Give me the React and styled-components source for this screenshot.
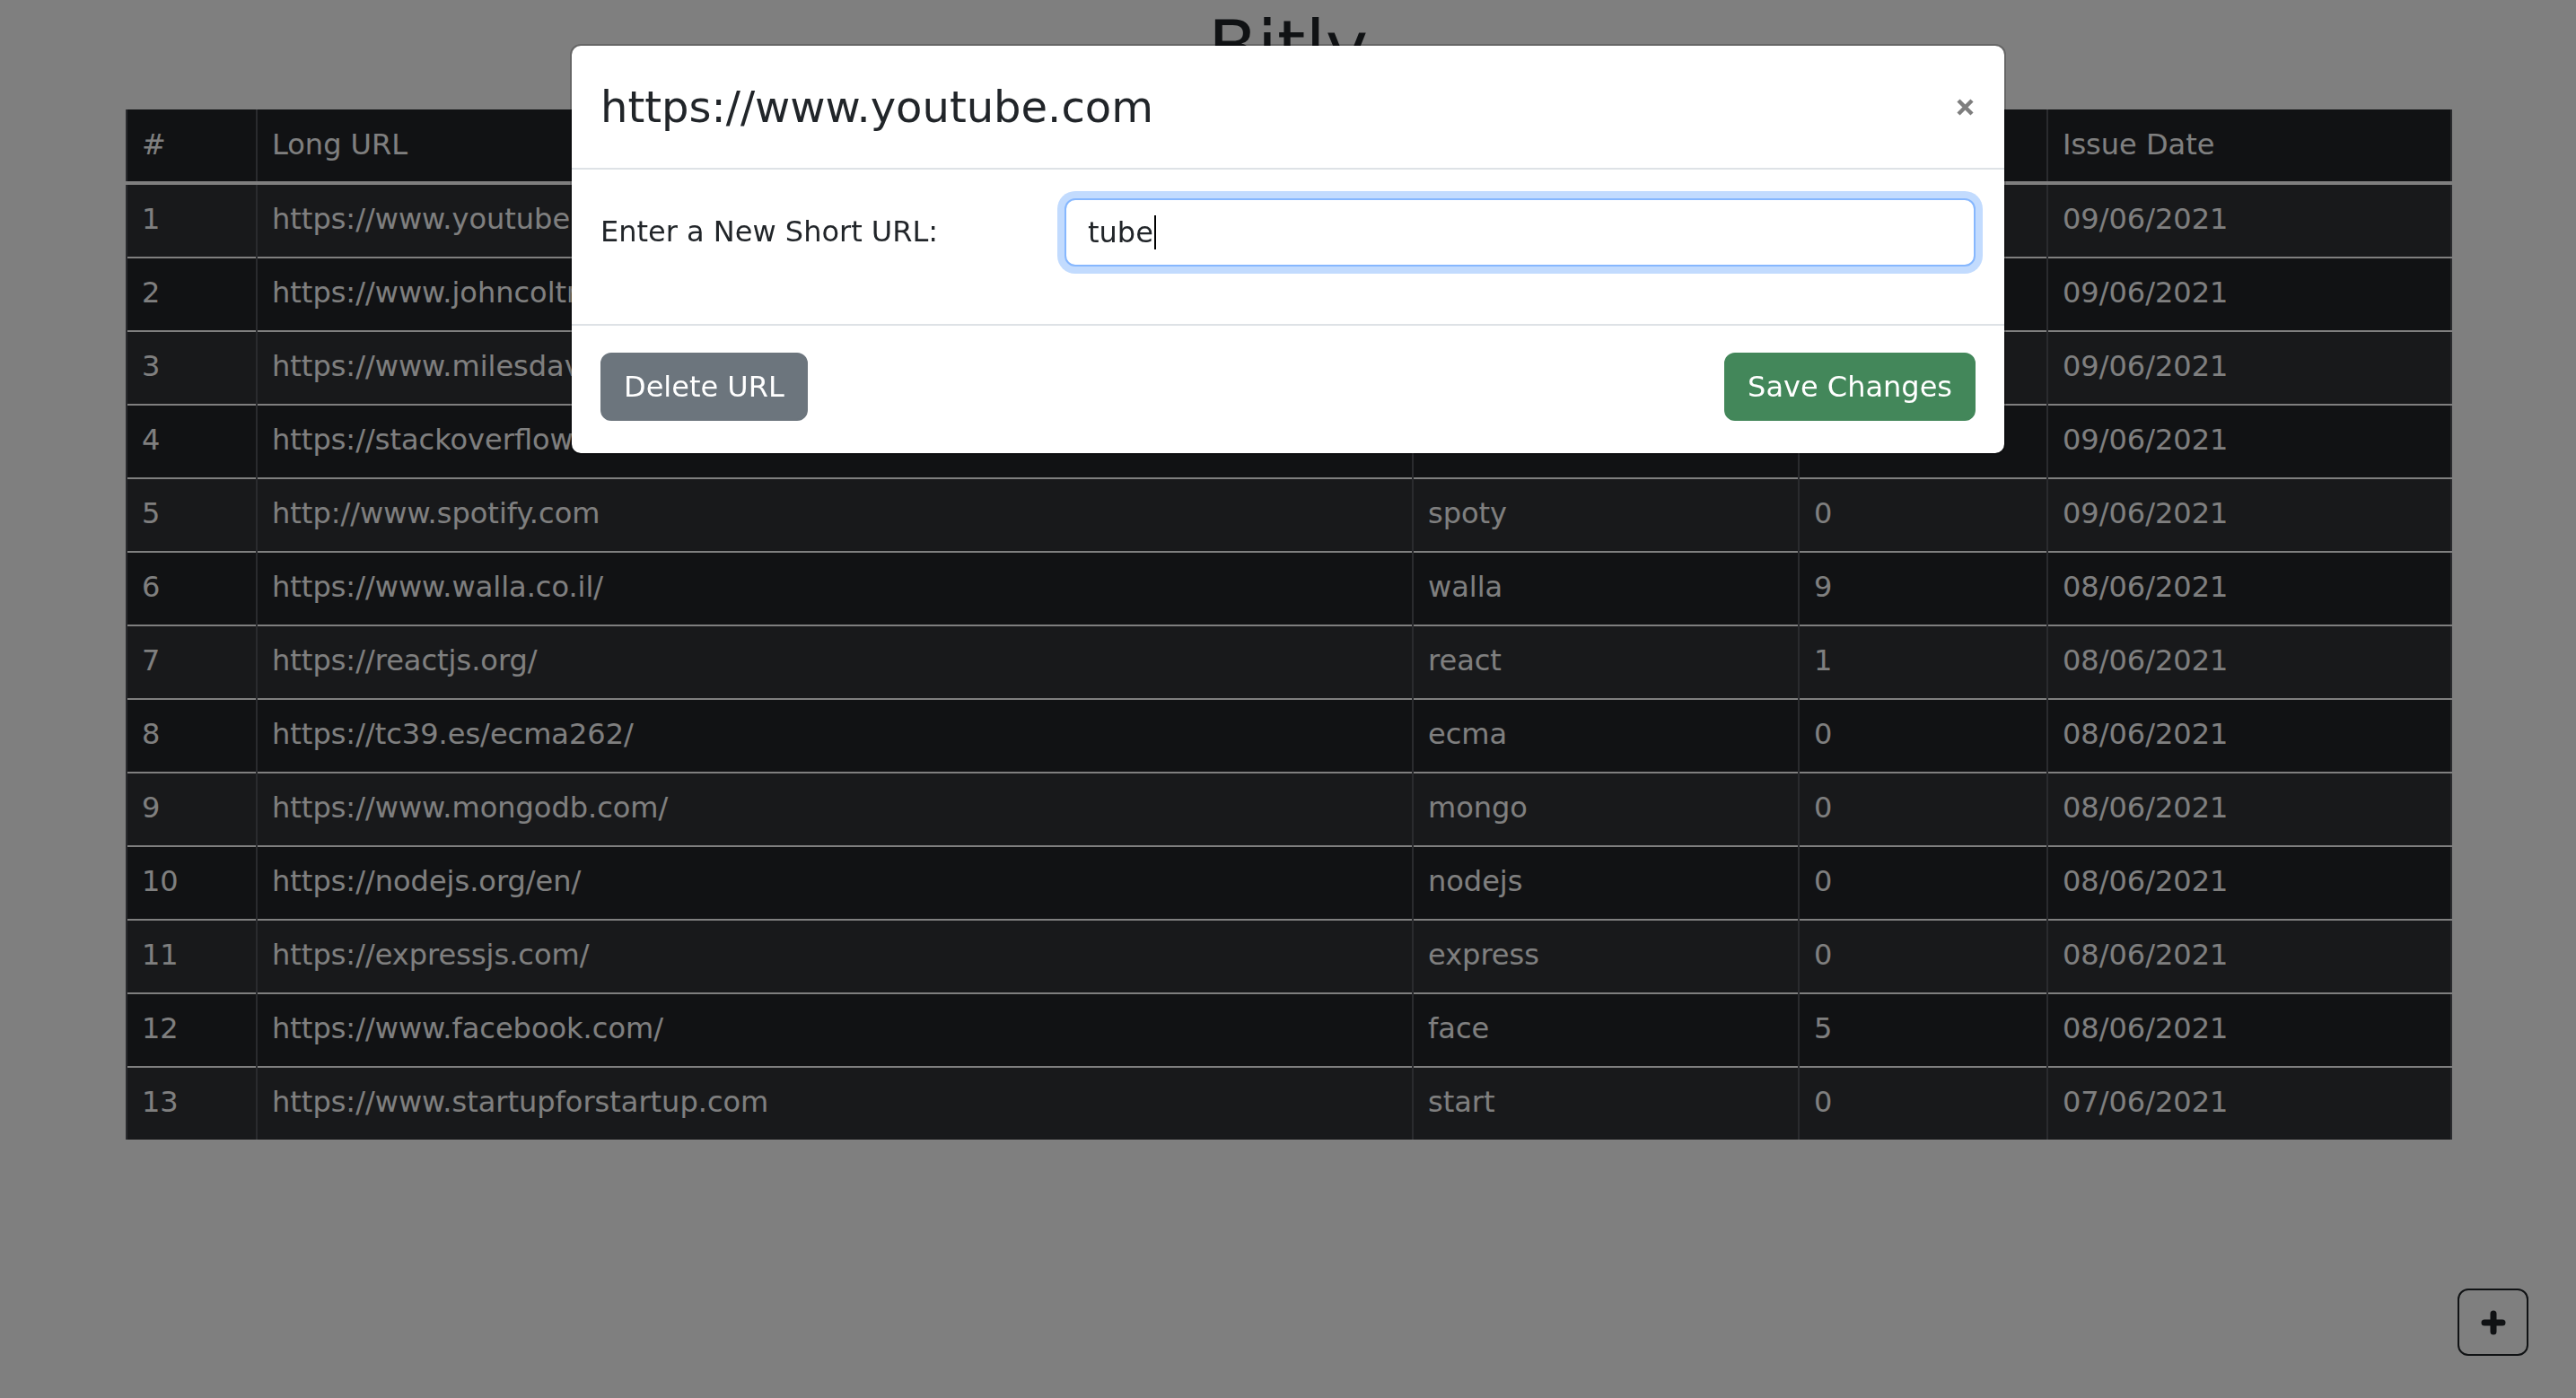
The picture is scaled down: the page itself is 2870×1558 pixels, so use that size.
import React from "react";
import styled, { createGlobalStyle } from "styled-components";

const GlobalStyle = createGlobalStyle`
  html, body {
    margin: 0;
    padding: 0;
  }
  body {
    background: #ffffff;
    color: #212529;
    font-family: "DejaVu Sans", "Liberation Sans", sans-serif;
    font-size: 32px;
    line-height: 1.5;
  }
  * {
    box-sizing: border-box;
  }
`;

const links = [
  { id: 1, long: "https://www.youtube.com", short: "tube", clicks: 3, date: "09/06/2021" },
  { id: 2, long: "https://www.johncoltrane.com", short: "coltrane", clicks: 0, date: "09/06/2021" },
  { id: 3, long: "https://www.milesdavis.com", short: "miles", clicks: 0, date: "09/06/2021" },
  { id: 4, long: "https://stackoverflow.com/", short: "stack", clicks: 2, date: "09/06/2021" },
  { id: 5, long: "http://www.spotify.com", short: "spoty", clicks: 0, date: "09/06/2021" },
  { id: 6, long: "https://www.walla.co.il/", short: "walla", clicks: 9, date: "08/06/2021" },
  { id: 7, long: "https://reactjs.org/", short: "react", clicks: 1, date: "08/06/2021" },
  { id: 8, long: "https://tc39.es/ecma262/", short: "ecma", clicks: 0, date: "08/06/2021" },
  { id: 9, long: "https://www.mongodb.com/", short: "mongo", clicks: 0, date: "08/06/2021" },
  { id: 10, long: "https://nodejs.org/en/", short: "nodejs", clicks: 0, date: "08/06/2021" },
  { id: 11, long: "https://expressjs.com/", short: "express", clicks: 0, date: "08/06/2021" },
  { id: 12, long: "https://www.facebook.com/", short: "face", clicks: 5, date: "08/06/2021" },
  { id: 13, long: "https://www.startupforstartup.com", short: "start", clicks: 0, date: "07/06/2021" },
];

const columns = [
  { label: "#", width: 145 },
  { label: "Long URL", width: 1288 },
  { label: "Short URL", width: 430 },
  { label: "Clicks", width: 277 },
  { label: "Issue Date", width: 450 },
];

const App = () => {
  return (
    <>
      <GlobalStyle />
      <Page>
        <Title>Bitly</Title>
        <UrlTable>
          <colgroup>
            {columns.map((c) => (
              <col key={c.label} style={{ width: c.width }} />
            ))}
          </colgroup>
          <thead>
            <tr>
              {columns.map((c) => (
                <HeadCell key={c.label}>{c.label}</HeadCell>
              ))}
            </tr>
          </thead>
          <tbody>
            {links.map((link) => (
              <Row key={link.id}>
                <Cell>{link.id}</Cell>
                <Cell>{link.long}</Cell>
                <Cell>{link.short}</Cell>
                <Cell>{link.clicks}</Cell>
                <Cell>{link.date}</Cell>
              </Row>
            ))}
          </tbody>
        </UrlTable>
      </Page>

      <AddButton aria-label="Add URL">
        <svg width="28" height="28" viewBox="0 0 28 28">
          <path d="M4 14H24M14 4V24" stroke="#212529" strokeWidth="7" strokeLinecap="round" fill="none" />
        </svg>
      </AddButton>

      <Backdrop />

      <ModalLayer>
        <Dialog>
          <ModalHeader>
            <ModalTitle>https://www.youtube.com</ModalTitle>
            <CloseButton aria-label="Close">
              <svg width="19" height="19" viewBox="0 0 19 19">
                <path d="M2 2L17 17M17 2L2 17" stroke="#000" strokeWidth="4.5" fill="none" />
              </svg>
            </CloseButton>
          </ModalHeader>
          <ModalBody>
            <FieldRow>
              <FieldLabel>Enter a New Short URL:</FieldLabel>
              <TextBox>
                tube
                <Caret />
              </TextBox>
            </FieldRow>
          </ModalBody>
          <ModalFooter>
            <Button $variant="secondary">Delete URL</Button>
            <Button $variant="success">Save Changes</Button>
          </ModalFooter>
        </Dialog>
      </ModalLayer>
    </>
  );
};

export default App;

const Page = styled.div`
  width: 2590px;
  margin: 0 auto;
  padding-top: 5px;
`;

const Title = styled.h1`
  margin: 0 0 21px;
  font-size: 80px;
  font-weight: 400;
  line-height: 1.2;
  text-align: center;
  color: #212529;
`;

const UrlTable = styled.table`
  width: 100%;
  table-layout: fixed;
  border-collapse: collapse;
  background: #222428;
  color: #ffffff;
  border-left: 2px solid #54565c;
  border-right: 2px solid #54565c;
`;

const HeadCell = styled.th`
  padding: 15px 16px 17px;
  line-height: 48px;
  text-align: left;
  font-weight: 500;
  border-left: 2px solid #54565c;
  border-bottom: 4px solid #ffffff;
  white-space: nowrap;
  overflow: hidden;
`;

const Row = styled.tr`
  background: #222428;
  border-bottom: 2px solid #ffffff;
  &:nth-child(odd) {
    background: #303236;
  }
  &:last-child {
    border-bottom: none;
  }
`;

const Cell = styled.td`
  padding: 14px 16px 18px;
  line-height: 48px;
  border-left: 2px solid #54565c;
  white-space: nowrap;
  overflow: hidden;
`;

const AddButton = styled.button`
  position: fixed;
  right: 53px;
  bottom: 47px;
  z-index: 5;
  width: 79px;
  height: 75px;
  display: flex;
  align-items: center;
  justify-content: center;
  padding: 0;
  background: transparent;
  border: 2px solid #212529;
  border-radius: 12px;
`;

const Backdrop = styled.div`
  position: fixed;
  inset: 0;
  z-index: 10;
  background: rgba(0, 0, 0, 0.5);
`;

const ModalLayer = styled.div`
  position: fixed;
  inset: 0;
  z-index: 20;
`;

const Dialog = styled.div`
  width: 1600px;
  margin: 49px auto 0;
  background: #ffffff;
  background-clip: padding-box;
  border: 2px solid rgba(0, 0, 0, 0.2);
  border-radius: 12px;
`;

const ModalHeader = styled.div`
  display: flex;
  align-items: center;
  justify-content: space-between;
  padding: 32px;
  border-bottom: 2px solid #dee2e6;
`;

const ModalTitle = styled.h4`
  margin: 0;
  font-size: 48px;
  font-weight: 400;
  line-height: 72px;
  color: #212529;
`;

const CloseButton = styled.button`
  display: flex;
  padding: 0;
  margin-right: 2px;
  border: none;
  background: transparent;
  opacity: 0.5;
`;

const ModalBody = styled.div`
  padding: 32px;
`;

const FieldRow = styled.div`
  display: grid;
  grid-template-columns: 517px 1fr;
  margin-bottom: 32px;
`;

const FieldLabel = styled.label`
  padding-top: 13px;
  line-height: 48px;
  color: #212529;
`;

const TextBox = styled.div`
  display: flex;
  align-items: center;
  height: 76px;
  padding: 12px 24px;
  line-height: 48px;
  color: #212529;
  background: #ffffff;
  border: 2px solid #86b7fe;
  border-radius: 12px;
  box-shadow: 0 0 0 8px rgba(13, 110, 253, 0.25);
`;

const Caret = styled.span`
  display: inline-block;
  width: 2px;
  height: 38px;
  margin-left: 1px;
  background: #000000;
`;

const ModalFooter = styled.div`
  display: flex;
  align-items: center;
  justify-content: space-between;
  padding: 30px 32px 36px;
  border-top: 2px solid #dee2e6;
`;

const Button = styled.button`
  padding: 12px 24px;
  font-family: inherit;
  font-size: 32px;
  line-height: 48px;
  color: #ffffff;
  border-radius: 12px;
  border: 2px solid ${(p) => (p.$variant === "success" ? "#43875a" : "#6c757d")};
  background: ${(p) => (p.$variant === "success" ? "#43875a" : "#6c757d")};
`;
